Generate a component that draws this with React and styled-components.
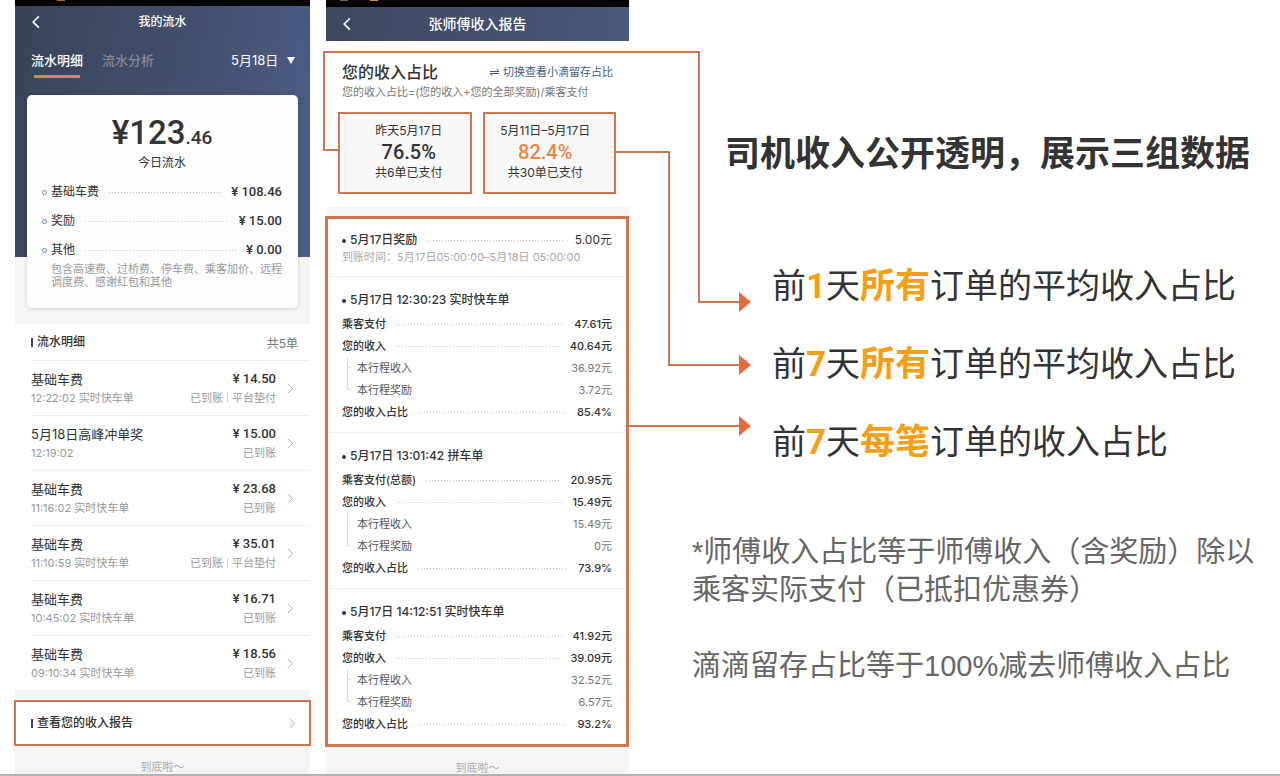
import React, { useState } from "react"
import styled, { createGlobalStyle } from "styled-components"

const numberFont = `Roboto, "Noto Sans CJK SC", sans-serif`

const GlobalStyle = createGlobalStyle`
    *, *::before, *::after {
        box-sizing: border-box;
    }

    body {
        margin: 0;
        background: #fff;
        color: #333;
        font-family: Inter, "Noto Sans CJK SC", sans-serif;
    }

    h1, h2, h3, p, ul, ol, dl, dd {
        margin: 0;
        padding: 0;
    }

    ul, ol {
        list-style: none;
    }

    button, select {
        border: 0;
        padding: 0;
        background: none;
        color: inherit;
        font: inherit;
        cursor: pointer;
    }

    a {
        color: inherit;
        text-decoration: none;
    }
`

const Page = styled.main`
    display: grid;
    grid-template-columns: 295fr 303fr 635fr;
    gap: 16px;
    min-height: 100vh;
    padding-left: 15px;
    border-bottom: 3px solid #b2b2b2;
    overflow: hidden;
`

const Phone = styled.section`
    position: relative;
    display: flex;
    flex-direction: column;
    background: #f5f5f5;
`

const StatusBar = styled.div`
    display: flex;
    gap: 22px;
    height: ${(props) => props.$height};
    padding-left: ${(props) => props.$left};
    background: #050303;
`

const StatusDot = styled.i`
    width: 8px;
    height: 1px;
    background: ${(props) => props.color};
`

const NavBar = styled.header`
    display: grid;
    grid-template-columns: 40px 1fr 40px;
    align-items: center;
    height: ${(props) => props.$height};
    color: #fff;
    background: ${(props) => props.$bg || "none"};
`

const NavTitle = styled.h2`
    font-size: ${(props) => props.size};
    line-height: 20px;
    font-weight: 500;
    text-align: center;
`

const BackButton = styled.button`
    display: flex;
    padding-left: 17px;
`

/* ---- 我的流水 ---- */

const Hero = styled.div`
    padding-bottom: 16px;
    background: linear-gradient(100deg, #394357, #434e6b 50%, #4d5d88) top / 100% 251px no-repeat #f5f5f5;
`

const Tabs = styled.div`
    display: flex;
    align-items: flex-start;
    gap: 19px;
    height: 57px;
    padding: 12px 15px 0 16px;
    color: #fff;
`

const Tab = styled.button`
    display: flex;
    flex-direction: column;
    align-items: center;
    gap: 5px;
    font-size: 13px;
    line-height: 20px;
    font-weight: 500;
    color: ${(props) => props.$active ? "#fff" : "#838896"};

    &::after {
        content: "";
        width: 46px;
        height: 3px;
        background: ${(props) => props.$active ? "#e08059" : "transparent"};
    }
`

const DatePicker = styled.label`
    display: flex;
    align-items: center;
    gap: 8px;
    margin-left: auto;
    font-size: 13px;
    line-height: 20px;
`

const DateSelect = styled.select`
    appearance: none;
    line-height: 20px;

    option {
        color: #333;
    }
`

const Card = styled.div`
    margin: 0 12px;
    padding: 18px 16px 19px 15px;
    border-radius: 5px;
    background: #fdfdfe;
    box-shadow: 0 1px 4px rgba(0, 0, 0, 0.14);
`

const Total = styled.p`
    font-family: ${numberFont};
    font-size: 33px;
    line-height: 40px;
    font-weight: 500;
    text-align: center;

    small {
        font-size: 19px;
        line-height: 1;
    }
`

const TotalLabel = styled.p`
    margin-bottom: 9px;
    font-size: 12px;
    line-height: 20px;
    text-align: center;
`

const FeeList = styled.dl`
    display: flex;
    flex-direction: column;
    gap: 9px;
`

const Fee = styled.div`
    display: flex;
    align-items: center;
    font-size: 12px;
    line-height: 20px;

    &::before {
        content: "";
        width: 5px;
        height: 5px;
        margin-right: 4px;
        border: 1px solid #6c8fae;
        border-radius: 50%;
    }

    dd {
        font-family: ${numberFont};
        font-size: 13px;
        font-weight: 500;
    }
`

const Leader = styled.span`
    flex: 1;
    height: 1px;
    margin: 0 10px;
    background: repeating-linear-gradient(90deg, #c4c4c4 0 1px, transparent 1px 3px);
`

const FeeNote = styled.p`
    margin: 3px 0 0 9px;
    font-size: 11px;
    line-height: 13px;
    color: #999;
`

const List = styled.div`
    padding-left: 16px;
    background: #fff;
`

const ListHead = styled.div`
    display: flex;
    align-items: center;
    justify-content: space-between;
    height: 37px;
    padding-right: 12px;
    border-bottom: 1px solid #eee;
    font-size: 12px;
    color: #777;
`

const Marked = styled.h3`
    display: flex;
    align-items: center;
    gap: 4px;
    font-size: 12px;
    line-height: 20px;
    font-weight: 500;
    color: #333;

    &::before {
        content: "";
        width: 2px;
        height: 9px;
        background: #37456e;
    }
`

const Item = styled.li`
    & + & {
        border-top: 1px solid #eee;
    }
`

const ItemLink = styled.a`
    display: grid;
    grid-template-columns: 1fr auto 34px;
    align-items: center;
    height: 54px;
`

const ItemTitle = styled.p`
    font-size: 13px;
    line-height: 20px;
`

const ItemValue = styled(ItemTitle)`
    font-family: ${numberFont};
    font-weight: 500;
`

const ItemSub = styled.p`
    font-size: 11px;
    line-height: 18px;
    color: #999;

    i {
        display: inline-block;
        width: 1px;
        height: 9px;
        margin: 0 4px;
        background: #ccc;
    }
`

const ItemRight = styled.div`
    text-align: right;
`

const ChevronCell = styled.span`
    display: flex;
    padding-left: 11px;
`

const ReportLink = styled.a`
    display: flex;
    align-items: center;
    justify-content: space-between;
    height: 46px;
    margin: 10px -1px 0;
    padding: 0 14px 0 15px;
    border: 2px solid #cf7551;
    background: #fff;
`

const EndText = styled.p`
    padding-top: 16px;
    font-size: 11px;
    line-height: 11px;
    text-align: center;
    color: #aaa;
`

/* ---- 收入报告 ---- */

const Ratio = styled.div`
    padding: 20px 13px 13px 12px;
    background: #fff;
    border-bottom: 9px solid #f5f5f5;
`

const RatioHead = styled.div`
    display: flex;
    align-items: center;
    justify-content: space-between;
    padding: 0 3px 0 4px;

    h3 {
        font-size: 16px;
        line-height: 22px;
        font-weight: 500;
    }
`

const SwitchButton = styled.button`
    display: flex;
    align-items: center;
    gap: 4px;
    font-size: 11px;
    line-height: 20px;
    color: #3f5c85;
`

const Formula = styled.p`
    padding-left: 4px;
    font-size: 11px;
    line-height: 18px;
    color: #777;
`

const Boxes = styled.div`
    display: grid;
    grid-template-columns: 1fr 1fr;
    gap: 11px;
    margin-top: 11px;
`

const Box = styled.div`
    height: 82px;
    padding: ${(props) => props.$accent ? "8px 8px 0 0" : "8px 0 0 8px"};
    border: 2px solid #cf7551;
    background: #f8f8f8;
    font-size: 12px;
    line-height: 18px;
    text-align: center;

    strong {
        display: block;
        font-family: ${numberFont};
        font-size: 20px;
        line-height: 24px;
        font-weight: 500;
        color: ${(props) => props.$accent ? "#ec8648" : "#333"};
    }
`

const Detail = styled.div`
    margin: 0 0 0 -1px;
    border: 3px solid #cf7551;
    background: #fff;
`

const Order = styled.section`
    padding: 13px 14px 9px;

    & + & {
        border-top: 1px solid #f0f0f0;
    }
`

const Reward = styled(Order)`
    padding: 11px 14px 12px;
`

const OrderTitle = styled.h3`
    margin-bottom: 3px;
    font-size: 12px;
    line-height: 20px;
    font-weight: 500;

    &::before {
        content: "";
        display: inline-block;
        width: 4px;
        height: 4px;
        margin-right: 4px;
        border-radius: 50%;
        background: #333;
        vertical-align: middle;
    }
`

const RewardRow = styled.div`
    display: flex;
    align-items: center;
    font-size: 12px;
    line-height: 20px;

    h3 {
        margin: 0;
    }
`

const RewardTime = styled.p`
    font-size: 11px;
    line-height: 14px;
    color: #aaa;
`

const Line = styled.div`
    display: flex;
    align-items: center;
    font-size: 11px;
    line-height: 22px;
    font-weight: 500;
`

const SubLine = styled.div`
    display: flex;
    justify-content: space-between;
    margin-left: 5px;
    font-size: 11px;
    line-height: 22px;
    color: #555;

    dt {
        display: flex;
        gap: 6px;
    }

    dt::before {
        content: "";
        width: 4px;
        height: 11px;
        border-left: 1px solid #ddd;
        border-bottom: 1px solid #ddd;
    }

    /* the first branch carries its trunk on to the next one */
    &:nth-of-type(3) {
        background: linear-gradient(#ddd, #ddd) left / 1px 100% no-repeat;
    }

    dd {
        color: #777;
    }
`

/* ---- connectors over the two screens ---- */

const Stroke = styled.span`
    position: absolute;
    pointer-events: none;
    border: 0 solid #cf7551;
`

const Bracket = styled(Stroke)`
    top: 51px;
    left: -3px;
    width: 15px;
    height: 100px;
    border-width: 0 0 2px 2px;
`

const TopElbow = styled(Stroke)`
    top: 51px;
    left: -3px;
    right: -71px;
    height: 252px;
    border-width: 2px 2px 0 0;
`

const MidElbow = styled(Stroke)`
    top: 151px;
    left: calc(100% - 13px);
    width: 54px;
    height: 215px;
    border-width: 2px 2px 0 0;
`

const Tail = styled(Stroke)`
    top: ${(props) => props.$top};
    left: calc(100% + ${(props) => props.$from});
    right: -110px;
    border-top-width: 2px;

    &::after {
        content: "";
        position: absolute;
        top: -11px;
        left: 100%;
        border: 10px solid transparent;
        border-left: 12px solid #e8693f;
        border-right: 0;
    }
`

/* ---- notes ---- */

const Notes = styled.section`
    padding: 127px 0 0 47px;
`

const Headline = styled.h1`
    margin-left: 33px;
    font-size: 35px;
    line-height: 52px;
    font-weight: 700;
    white-space: nowrap;
`

const Points = styled.ol`
    margin: 68px 0 52px 80px;
    font-family: ${numberFont};
    font-size: 34px;
    line-height: 78px;
    white-space: nowrap;

    b {
        color: #f39f18;
        font-size: 35px;
        line-height: 1;
    }
`

const Remark = styled.p`
    margin-bottom: 38px;
    font-family: "Liberation Sans", "Noto Sans CJK SC", sans-serif;
    font-size: 29px;
    line-height: 38px;
    color: #666;
`

const Chevron = ({ left, size = 9, color = "#aaa", width = 1 }) => (
    <svg width={size / 2 + 2} height={size + 2} viewBox="0 0 7 12" fill="none" stroke={color} strokeWidth={width}>
        <path d={left ? "M6 1L1 6l5 5" : "M1 1l5 5-5 5"} />
    </svg>
)

const fees = [
    { name: "基础车费", value: "¥ 108.46" },
    { name: "奖励", value: "¥ 15.00" },
    { name: "其他", value: "¥ 0.00" },
]

const flows = [
    { title: "基础车费", time: "12:22:02 实时快车单", value: "¥ 14.50", advance: true },
    { title: "5月18日高峰冲单奖", time: "12:19:02", value: "¥ 15.00" },
    { title: "基础车费", time: "11:16:02 实时快车单", value: "¥ 23.68" },
    { title: "基础车费", time: "11:10:59 实时快车单", value: "¥ 35.01", advance: true },
    { title: "基础车费", time: "10:45:02 实时快车单", value: "¥ 16.71" },
    { title: "基础车费", time: "09:10:34 实时快车单", value: "¥ 18.56" },
]

const orders = [
    { title: "5月17日 12:30:23 实时快车单", payLabel: "乘客支付", pay: "47.61元", income: "40.64元", trip: "36.92元", bonus: "3.72元", ratio: "85.4%" },
    { title: "5月17日 13:01:42 拼车单", payLabel: "乘客支付(总额)", pay: "20.95元", income: "15.49元", trip: "15.49元", bonus: "0元", ratio: "73.9%" },
    { title: "5月17日 14:12:51 实时快车单", payLabel: "乘客支付", pay: "41.92元", income: "39.09元", trip: "32.52元", bonus: "6.57元", ratio: "93.2%" },
]

const points = [
    { day: "1", which: "所有", rest: "订单的平均收入占比" },
    { day: "7", which: "所有", rest: "订单的平均收入占比" },
    { day: "7", which: "每笔", rest: "订单的收入占比" },
]

const LeaderLine = ({ label, value }) => (
    <Line>
        <dt>{label}</dt>
        <Leader />
        <dd>{value}</dd>
    </Line>
)

const FlowScreen = () => {

    const [tab, setTab] = useState("流水明细")

    return (
        <Phone>
            <StatusBar $height="6px" $left="42px">
                <StatusDot color="#b8653f" />
            </StatusBar>
            <Hero>
                <NavBar $height="32px">
                    <BackButton aria-label="返回">
                        <Chevron left size={12} color="#fff" width={1.5} />
                    </BackButton>
                    <NavTitle size="12px">我的流水</NavTitle>
                </NavBar>
                <Tabs>
                    {["流水明细", "流水分析"].map((name) => (
                        <Tab key={name} $active={tab === name} onClick={() => setTab(name)}>{name}</Tab>
                    ))}
                    <DatePicker>
                        <DateSelect aria-label="日期">
                            <option>5月18日</option>
                        </DateSelect>
                        <svg width="8" height="7" viewBox="0 0 8 7" fill="#fff">
                            <path d="M0 0h8L4 7z" />
                        </svg>
                    </DatePicker>
                </Tabs>
                <Card>
                    <Total>¥123<small>.46</small></Total>
                    <TotalLabel>今日流水</TotalLabel>
                    <FeeList>
                        {fees.map((fee) => (
                            <Fee key={fee.name}>
                                <dt>{fee.name}</dt>
                                <Leader />
                                <dd>{fee.value}</dd>
                            </Fee>
                        ))}
                    </FeeList>
                    <FeeNote>包含高速费、过桥费、停车费、乘客加价、远程调度费、感谢红包和其他</FeeNote>
                </Card>
            </Hero>
            <List>
                <ListHead>
                    <Marked>流水明细</Marked>
                    <span>共5单</span>
                </ListHead>
                <ul>
                    {flows.map((flow) => (
                        <Item key={flow.time}>
                            <ItemLink href="#flow">
                                <div>
                                    <ItemTitle>{flow.title}</ItemTitle>
                                    <ItemSub>{flow.time}</ItemSub>
                                </div>
                                <ItemRight>
                                    <ItemValue>{flow.value}</ItemValue>
                                    <ItemSub>已到账{flow.advance && <><i />平台垫付</>}</ItemSub>
                                </ItemRight>
                                <ChevronCell><Chevron /></ChevronCell>
                            </ItemLink>
                        </Item>
                    ))}
                </ul>
            </List>
            <ReportLink href="#report">
                <Marked>查看您的收入报告</Marked>
                <Chevron />
            </ReportLink>
            <EndText>到底啦～</EndText>
        </Phone>
    )
}

const ReportScreen = () => (
    <Phone>
        <StatusBar $height="7px" $left="14px">
            <StatusDot color="#666" />
            <StatusDot color="#d08a52" />
        </StatusBar>
        <NavBar $height="34px" $bg="linear-gradient(100deg, #3d465e, #4b5878)">
            <BackButton aria-label="返回">
                <Chevron left size={12} color="#fff" width={1.5} />
            </BackButton>
            <NavTitle size="14px">张师傅收入报告</NavTitle>
        </NavBar>
        <Ratio>
            <RatioHead>
                <h3>您的收入占比</h3>
                <SwitchButton>
                    <svg width="9" height="7" viewBox="0 0 9 7" fill="none" stroke="#3f5c85">
                        <path d="M0 2.5h9L6.5 0M9 4.5H0L2.5 7" />
                    </svg>
                    切换查看小滴留存占比
                </SwitchButton>
            </RatioHead>
            <Formula>您的收入占比=(您的收入+您的全部奖励)/乘客支付</Formula>
            <Boxes>
                <Box>
                    <p>昨天5月17日</p>
                    <strong>76.5%</strong>
                    <p>共6单已支付</p>
                </Box>
                <Box $accent>
                    <p>5月11日–5月17日</p>
                    <strong>82.4%</strong>
                    <p>共30单已支付</p>
                </Box>
            </Boxes>
        </Ratio>
        <Detail>
            <Reward>
                <RewardRow>
                    <OrderTitle>5月17日奖励</OrderTitle>
                    <Leader />
                    <span>5.00元</span>
                </RewardRow>
                <RewardTime>到账时间：5月17日05:00:00–5月18日 05:00:00</RewardTime>
            </Reward>
            {orders.map((order) => (
                <Order key={order.title}>
                    <OrderTitle>{order.title}</OrderTitle>
                    <dl>
                        <LeaderLine label={order.payLabel} value={order.pay} />
                        <LeaderLine label="您的收入" value={order.income} />
                        <SubLine>
                            <dt>本行程收入</dt>
                            <dd>{order.trip}</dd>
                        </SubLine>
                        <SubLine>
                            <dt>本行程奖励</dt>
                            <dd>{order.bonus}</dd>
                        </SubLine>
                        <LeaderLine label="您的收入占比" value={order.ratio} />
                    </dl>
                </Order>
            ))}
        </Detail>
        <EndText>到底啦～</EndText>
        <Bracket />
        <TopElbow />
        <MidElbow />
        <Tail $top="301px" $from="69px" />
        <Tail $top="364px" $from="39px" />
        <Tail $top="425px" $from="0px" />
    </Phone>
)

const App = () => {

    return (
        <>
            <GlobalStyle />
            <Page>
                <FlowScreen />
                <ReportScreen />
                <Notes>
                    <Headline>司机收入公开透明，展示三组数据</Headline>
                    <Points>
                        {points.map((point) => (
                            <li key={point.day + point.which}>
                                前<b>{point.day}</b>天<b>{point.which}</b>{point.rest}
                            </li>
                        ))}
                    </Points>
                    <Remark>
                        *师傅收入占比等于师傅收入（含奖励）除以<br />
                        乘客实际支付（已抵扣优惠券）
                    </Remark>
                    <Remark>滴滴留存占比等于100%减去师傅收入占比</Remark>
                </Notes>
            </Page>
        </>
    )
}

export default App
